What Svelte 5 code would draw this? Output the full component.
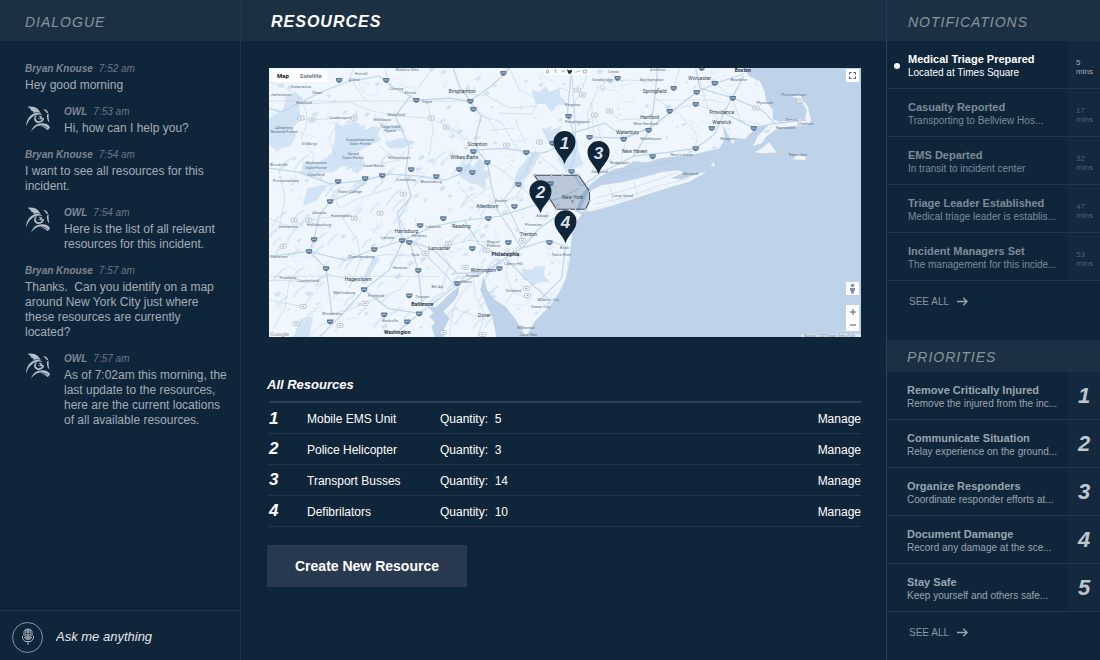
<script lang="ts">
	type Message = { from: string; time: string; text: string };
	type Label = [string, number, number, number?];

	const messages: Message[] = [
		{ from: 'Bryan Knouse', time: '7:52 am', text: 'Hey good morning' },
		{ from: 'OWL', time: '7:53 am', text: 'Hi, how can I help you?' },
		{
			from: 'Bryan Knouse',
			time: '7:54 am',
			text: 'I want to see all resources for this\nincident.'
		},
		{
			from: 'OWL',
			time: '7:54 am',
			text: 'Here is the list of all relevant\nresources for this incident.'
		},
		{
			from: 'Bryan Knouse',
			time: '7:57 am',
			text: 'Thanks.  Can you identify on a map\naround New York City just where\nthese resources are currently\nlocated?'
		},
		{
			from: 'OWL',
			time: '7:57 am',
			text: 'As of 7:02am this morning, the\nlast update to the resources,\nhere are the current locations\nof all available resources.'
		}
	];

	const resources = [
		{ name: 'Mobile EMS Unit', quantity: 5 },
		{ name: 'Police Helicopter', quantity: 3 },
		{ name: 'Transport Busses', quantity: 14 },
		{ name: 'Defibrilators', quantity: 10 }
	];

	const notifications = [
		{ title: 'Medical Triage Prepared', detail: 'Located at Times Square', mins: 5 },
		{ title: 'Casualty Reported', detail: 'Transporting to Bellview Hos...', mins: 17 },
		{ title: 'EMS Departed', detail: 'In transit to incident center', mins: 32 },
		{ title: 'Triage Leader Established', detail: 'Medical triage leader is establis...', mins: 47 },
		{ title: 'Incident Managers Set', detail: 'The management for this incide...', mins: 53 }
	];

	const priorities = [
		{ title: 'Remove Critically Injured', detail: 'Remove the injured from the inc...' },
		{ title: 'Communicate Situation', detail: 'Relay experience on the ground...' },
		{ title: 'Organize Responders', detail: 'Coordinate responder efforts at...' },
		{ title: 'Document Damange', detail: 'Record any damage at the sce...' },
		{ title: 'Stay Safe', detail: 'Keep yourself and others safe...' }
	];

	const pins = [
		{ n: 1, x: 295, y: 96 },
		{ n: 3, x: 329, y: 106 },
		{ n: 2, x: 271, y: 145 },
		{ n: 4, x: 296, y: 175 }
	];

	const vertices = [
		[265, 107], [282, 107], [293, 107], [309, 107], [320, 123],
		[320, 133], [316, 141], [306, 141], [300, 141], [287, 141]
	];

	// name, x, y, size
	const labels: Label[] = [
		['Boston', 473, 4, 6], ['Philadelphia', 236, 188, 6], ['Baltimore', 153, 238, 6],
		['Washington', 128, 266, 6], ['New York', 303, 131],
		['Binghamton', 193, 25], ['Scranton', 208, 78], ['Wilkes Barre', 195, 91],
		['Williamsport', 130, 91], ['Tioga State', 121, 60], ['Forest', 121, 64],
		['Susquehannock', 91, 73], ['State Forest', 91, 77], ['Sproul', 84, 87],
		['State Forest', 84, 91], ['Moshannon', 47, 96], ['State Forest', 47, 101],
		['Allegheny', 15, 61], ['National Forest', 15, 65], ['State College', 81, 125],
		['Lewisburg', 137, 113], ['Bloomsburg', 162, 115], ['Lock Haven', 105, 99],
		['Clearfield', 47, 108], ['Punxsutawney', 17, 114], ['Brookville', 10, 98],
		['St Marys', 40, 77], ['Coudersport', 71, 51], ['Mansfield', 127, 48],
		['Wellsboro', 113, 53], ['Bradford', 35, 36], ['Olean', 48, 26],
		['Salamanca', 32, 20], ['Jamestown', 12, 28], ['Corning', 127, 22],
		['Elmira', 141, 26], ['Hornell', 92, 7], ['Alfred', 85, 13],
		['Watkins Glen', 138, 3], ['Sayre', 158, 35], ['Easton', 232, 134],
		['Allentown', 218, 140], ['Altoona', 50, 146], ['Huntingdon', 72, 149],
		['Hollidaysburg', 50, 158], ['Johnstown', 19, 160], ['Harrisburg', 137, 165],
		['Hershey', 150, 169], ['Lebanon', 164, 160], ['Reading', 192, 160],
		['Carlisle', 118, 171], ['York', 146, 188], ['Lancaster', 170, 182],
		['Chambersburg', 92, 190], ['Hanover', 131, 201], ['Somerset', 10, 190],
		['Cumberland', 39, 214], ['Frostburg', 19, 211], ['Hagerstown', 89, 213],
		['Martinsburg', 75, 226], ['Frederick', 107, 229], ['Towson', 153, 230],
		['Rockville', 121, 254], ['Winchester', 63, 247], ['Bel Air', 168, 220],
		['Newark', 203, 209], ['Wilmington', 214, 204], ['Elkton', 197, 215],
		['Cherry Hill', 244, 197], ['Vineland', 244, 224], ['Dover', 215, 249],
		['Atlantic City', 279, 233], ['Ocean City', 271, 240], ['Wildwood', 256, 261],
		['Cape May', 259, 268], ['Trenton', 259, 168], ['Princeton', 264, 158],
		['Edison', 273, 149], ['King of', 224, 175], ['Prussia', 224, 179],
		['Brick', 295, 181], ['Toms River', 292, 188], ['Lenox', 344, 5],
		['Amherst', 388, 3], ['Northampton', 382, 13], ['Stockbridge', 333, 13],
		['Worcester', 430, 12], ['Brookline', 469, 13], ['Springfield', 385, 25],
		['Hartford', 380, 51], ['West Hartford', 376, 57], ['Providence', 452, 46],
		['Warwick', 452, 56], ['Plymouth', 495, 36], ['Provincetown', 524, 28],
		['Barnstable', 516, 61], ['Dennis', 522, 53], ['Chatham', 536, 57],
		['Newport', 458, 72], ['Nantucket', 528, 88], ['Waterbury', 358, 66],
		['Middletown', 381, 72], ['New Haven', 365, 85], ['New London', 412, 88],
		['Bridgeport', 350, 96], ['Stamford', 330, 105], ['Montauk', 421, 107],
		['Long Island', 353, 129], ['Poughkeepsie', 308, 55], ['Kingston', 303, 38]
	];

	const major = [
		'New York', 'Binghamton', 'Scranton', 'Wilkes Barre', 'Allentown', 'Harrisburg',
		'Lancaster', 'Reading', 'Trenton', 'Wilmington', 'Worcester', 'Springfield',
		'Hartford', 'Providence', 'Warwick', 'New Haven', 'Waterbury', 'Hagerstown', 'Dover'
	];

	const interstates = [
		[70, 12], [117, 12], [234, 5], [147, 32], [201, 33], [204, 41], [204, 83],
		[190, 101], [203, 104], [218, 94], [257, 84], [283, 75], [249, 116], [167, 108],
		[142, 101], [113, 107], [96, 110], [69, 113], [61, 133], [174, 150], [219, 150],
		[245, 138], [151, 157], [133, 172], [140, 174], [105, 181], [45, 171], [40, 183],
		[57, 200], [95, 221], [149, 202], [140, 227], [188, 215], [203, 180], [239, 174],
		[230, 200], [280, 174], [115, 246], [150, 245], [138, 253], [61, 253], [432, 0],
		[348, 10], [404, 20], [445, 15], [427, 24], [426, 36], [463, 30], [400, 43],
		[379, 62], [442, 60], [484, 60], [354, 71], [320, 69], [426, 80], [383, 88],
		[302, 103], [299, 48], [281, 115]
	];

	const routes = [
		[32, 50], [43, 52], [85, 50], [162, 50], [177, 59], [237, 77], [270, 74],
		[134, 126], [25, 152], [40, 152], [85, 150], [111, 145], [14, 178], [179, 175],
		[156, 185], [217, 182], [253, 172], [196, 199], [34, 238], [27, 255], [71, 257],
		[96, 235], [257, 220], [258, 227], [308, 22], [313, 27], [325, 47], [340, 43],
		[486, 40], [530, 33], [174, 264], [213, 266]
	];

	const highways = [
		'M0 40 L12 44 32 34 52 24 78 14 110 8 125 20 148 32 180 30 200 33 212 48 206 70 208 82 195 104 176 112 150 108 120 106 96 112 62 116 30 104 0 100',
		'M208 82 Q235 78 258 84 T300 66 L335 55 356 70 383 58 404 42 427 24 450 14 474 6',
		'M201 33 L190 18 184 0 M200 33 Q225 18 240 0 M302 0 L298 45 308 78 300 102 312 118',
		'M208 82 L218 95 222 118 228 142 240 160 252 180 236 190 214 204 188 216 168 232 150 245 130 262',
		'M0 188 L40 183 76 192 105 181 134 172 164 158 196 152 230 148 262 138 290 130 310 120',
		'M134 172 L120 202 95 221 74 245 50 269 M95 221 L118 240 150 245',
		'M140 172 L149 202 153 238 M140 172 L165 182 188 205 214 204',
		'M133 170 L128 145 142 128 136 108 140 78 126 48 141 28',
		'M312 118 L332 104 364 88 400 84 426 80 445 66 454 45 474 8',
		'M364 88 L381 60 385 30 388 0 M426 0 L430 20 463 30 492 42 506 56',
		'M454 45 L484 60 500 56 536 52 M320 69 L354 70 380 60',
		'M252 180 L270 160 292 145 M252 180 L278 172 296 178 292 210 270 232',
		'M236 190 L256 210 278 230 M195 152 L210 176 230 188',
		'M61 133 L84 124 98 112 M61 133 L50 148 45 171 40 183 57 200 63 247'
	];

	const streets = [
		'M0 14 Q25 20 34 36 T32 70 L45 88 40 104 M34 36 L80 34 100 42 126 48 160 50 178 58 208 78',
		'M84 14 L94 30 100 34 M71 51 L60 70 68 92 100 98 130 92 138 80',
		'M158 35 L164 60 160 88 M164 0 L150 18 141 28 M190 25 L218 28 240 40 266 38',
		'M212 48 L232 54 246 78 266 96 M240 0 L250 22 270 32 290 20 302 24',
		'M230 45 L262 46 272 28 M246 52 L256 76 M220 62 L246 60',
		'M10 102 L16 130 10 160 0 170 M47 108 L60 116 70 140 90 130 122 120',
		'M0 150 L20 158 50 150 72 148 92 140 M72 148 L88 172 92 190 80 220',
		'M92 190 L120 186 146 188 170 180 198 172 224 174 M170 180 L180 196 172 220',
		'M0 212 L20 212 40 215 60 206 89 214 M20 212 L16 240 4 260 M60 246 L84 240 107 230 120 240',
		'M40 269 L50 258 66 250 M0 232 L34 238 46 224 M107 230 L130 222 140 210',
		'M180 269 L184 240 194 222 204 214 M208 269 L216 246 206 228 204 212 M184 240 L214 250',
		'M244 224 L236 206 240 190 M244 224 L262 232 M244 224 L236 234',
		'M320 69 L318 44 328 22 344 6 M333 14 L360 12 384 14 M340 43 L350 52 380 50',
		'M385 30 L410 46 428 68 424 84 M400 42 L426 36 452 46 M358 66 L350 96',
		'M430 12 L438 40 452 56 456 70 M404 20 L410 0 M445 15 L463 30',
		'M463 30 L470 52 492 56 M320 0 L312 24 302 38 M326 47 L334 82 330 104',
		'M325 128 L356 122 386 112 408 104 M325 135 L354 128 388 118 420 110',
		'M266 84 L280 96 290 104 M262 88 L256 110 248 128 232 134 M228 142 L206 136 190 118',
		'M190 140 L204 130 222 118 M110 78 L128 92 M146 150 L150 168 M10 60 L28 50 40 52 71 50',
		'M84 0 L80 14 M116 0 L118 10 M218 94 L236 104 249 116 262 128'
	];

	const forests = [
		'M0 50 L14 42 18 28 26 24 34 30 30 40 32 50 24 60 27 68 22 78 12 80 8 84 0 76Z',
		'M66 56 L74 58 88 54 96 62 104 58 112 60 108 66 112 72 98 78 88 84 92 88 96 96 88 106 80 98 72 98 64 104 56 104 46 96 62 86 66 72Z',
		'M110 54 L120 58 132 56 136 64 124 63 118 66Z M116 74 L132 70 146 74 134 80 120 80Z',
		'M34 94 L44 95 56 92 62 104 52 104 44 110 32 106Z',
		'M190 96 L200 95 204 99 210 90 216 96 214 102 222 104 216 112 216 122 208 116 202 116 190 108Z',
		'M248 102 L258 90 266 82 270 88 260 106 242 122Z',
		'M252 200 L262 202 266 198 276 198 274 206 280 214 270 214 262 218 260 212 254 212Z',
		'M104 188 L110 190 96 216 92 214Z M38 120 L58 116 48 132 34 138Z',
		'M262 22 L270 24 276 18 280 24 290 20 291 28 298 36 288 37 282 44 276 36 266 36Z M272 60 L282 62 292 58 290 66 298 72 286 72 280 76Z',
		'M24 269 L32 250 44 248 40 269Z M286 84 L308 80 314 96 296 104Z'
	];

	// small repeatable scatter for woodland and back-road texture
	let seed = 11;
	function rand(): number {
		seed = (seed * 16807) % 2147483647;
		return seed / 2147483647;
	}

	const ridges = Array.from({ length: 100 }, () => {
		const x = rand() * 220;
		const y = 95 + rand() * 165;
		const len = 4 + rand() * 12;
		return `M${x} ${y} q${len * 0.4} ${-len * 0.8} ${len} ${-len}`;
	}).join(' ');

	const patches = Array.from({ length: 260 }, () => {
		const x = rand() * 500;
		const y = rand() * 260;
		const w = 1 + rand() * 4;
		return `M${x} ${y} l${w} ${-w * 0.6} ${w * 0.6} ${w * 0.5} ${-w} ${w * 0.7}z`;
	}).join(' ');

	const lanes = Array.from({ length: 220 }, () => {
		const x = rand() * 510;
		const y = rand() * 260;
		return `M${x} ${y} q${rand() * 16 - 8} ${rand() * 12} ${rand() * 30 - 15} ${rand() * 22 - 8}`;
	}).join(' ');

	let question = $state('');
	let mapType = $state('Map');
</script>

{#snippet owl()}
	<svg class="owl" viewBox="0 0 75 80" aria-hidden="true">
		<path d="M7 2 C18 0 29 2 36 8 C41 12 42 17 47 22 C38 18 30 17 24 22 C26 17 23 14 16 13 C20 10 13 8 7 2Z" />
		<path d="M30 21 C14 25 3 40 2 61 C8 46 14 35 31 27 C38 24 45 25 51 28 C46 21 38 19 30 21Z" />
		<path d="M32 27 C22 34 25 49 37 50 C46 52 53 46 56 38 L51 34 C50 42 45 46 39 45 C31 44 28 35 34 29Z" />
		<path d="M39 31 C43 27 51 30 50 37 C47 41 39 40 38 35 L43 37 L45 33Z" />
		<path d="M53 10 C61 9 67 15 68 22 L62 19 C61 15 58 13 53 10Z M64 25 L69 23 C68 33 70 42 71 49 C66 44 63 36 64 25Z" />
		<path d="M17 76 C22 59 34 51 49 51 C60 51 70 55 73 63 L70 69 C62 60 53 57 44 58 C32 59 24 66 17 76Z" />
		<path d="M45 59 C55 59 61 63 70 68 L65 71 C60 65 54 62 45 59Z" />
	</svg>
{/snippet}

{#snippet seeAll()}
	<a class="see-all" href="#all">
		SEE ALL
		<svg viewBox="0 0 11 9" width="11" height="9" aria-hidden="true">
			<path d="M0 4.5 H10 M6.2 0.8 L10 4.5 6.2 8.2" />
		</svg>
	</a>
{/snippet}

<div class="app">
	<section class="dialogue">
		<h2 class="bar">DIALOGUE</h2>
		<div class="messages">
			{#each messages as message, i (i)}
				<article class="message">
					{#if message.from === 'OWL'}
						{@render owl()}
					{/if}
					<div>
						<p class="meta"><b>{message.from}</b><span>{message.time}</span></p>
						<p class="text">{message.text}</p>
					</div>
				</article>
			{/each}
		</div>
		<form class="ask">
			<button type="button" class="mic" aria-label="Speak">
				<svg viewBox="0 0 14 18" width="14" height="18" aria-hidden="true">
					<path class="fill" d="M4 3.5 Q4 1 7 1 Q10 1 10 3.5 V8.5 Q10 11 7 11 Q4 11 4 8.5Z" />
					<path d="M3 8 V3.5 Q3.5 1 7 1 Q10.5 1 11 3.5 V8 M1.5 8 V10.5 L4 13.5 H10 L12.5 10.5 V8 M3 9 Q4 11.5 7 11.5 T11 9 M7 13.5 V17" />
					<path class="slit" d="M5.5 2.5 V8.5 M8.5 2.5 V8.5 M4 5.5 H10" />
				</svg>
			</button>
			<input type="text" aria-label="Ask me anything" placeholder="Ask me anything" bind:value={question} />
		</form>
	</section>

	<main class="resources">
		<h1 class="bar">RESOURCES</h1>
		<div class="content">
			<div class="map">
				<svg class="canvas" viewBox="0 0 591 269" role="img" aria-label="Map of resource locations">
					<rect class="land" width="591" height="269" />
					{#each forests as d, i (i)}
						<path class="forest" {d} />
					{/each}
					<path class="forest" d={patches} />
					<path class="ridge" d={ridges} />
					<path class="lane" d={lanes} />
					<path class="state-line" d="M0 33 H198 Q222 50 228 66 M0 208 H170 M388 32 H446 M322 34 L326 92" />
					{#each streets as d, i (i)}
						<path class="street" {d} />
					{/each}
					{#each highways as d, i (i)}
						<path class="highway" {d} />
					{/each}
					<path class="river" d="M146 175 L160 190 176 206 188 220 M137 165 L130 150 142 128 M266 84 L254 106 234 132 246 154 254 174 236 190 218 204 214 220 M302 0 L306 60 304 100 310 118" />

					<path class="water" d="M591 0 H474 L479 8 490 13 495 24 496 33 503 42 503 51 510 54 524 51 535 52 537 42 530 31 521 28 530 27 538 39 541 52 538 57 524 58 510 60 504 63 496 69 492 75 483 78 488 68 499 57 490 58 481 65 475 71 466 70 463 76 458 67 454 57 455 71 450 80 437 83 424 86 408 88 390 90 378 94 364 93 354 99 344 101 331 108 321 116 313 125 306 143 312 146 308 152 303 165 301 178 300 194 296 211 289 225 281 237 266 252 256 269 H591Z" />
					<path class="water" d="M256 269 L253 261 244 248 236 238 225 231 218 222 214 208 211 222 217 236 223 249 227 269Z" />
					<path class="water" d="M190 218 L183 223 174 232 166 239 158 238 164 244 160 248 166 254 162 258 166 269 H174 L175 260 180 250 174 243 184 233 189 226Z" />
					<path class="land" d="M319 123 L332 117 352 114 374 109 391 104 408 102 415 104 401 110 412 111 430 105 437 104 418 114 400 119 372 128 347 136 322 143 310 143Z" />
					<path class="land" d="M485 84 L495 78 499 74 505 82 508 84 492 85Z M523 91 L528 86 536 89 535 92Z M441 98 L444 93 445 98Z" />
					<path class="street" d="M325 130 L356 122 386 112 408 104 M325 136 L354 130 388 118 420 110 M340 118 L344 134 M364 112 L368 128" />
					<path class="shoal" d="M324 141 L372 126 400 117 M299 184 L298 198 288 220 266 248 M262 230 L274 234 284 224" />
					<path class="ferry" d="M330 109 L424 88 M424 86 L436 92" />

					{#each interstates as [x, y], i (i)}
						<g>
							<path class="shield" d="M{x - 3} {y - 2} h6 q1 4 -3 5 q-4 -1 -3 -5z" />
							<path class="shield-mark" d="M{x - 2} {y} h4" />
						</g>
					{/each}
					{#each routes as [x, y], i (i)}
						<g>
							<rect class="route" x={x - 3} y={y - 2} width="6" height="4" rx="1" />
							<path class="route-mark" d="M{x - 1} {y} h2" />
						</g>
					{/each}

					<polygon class="zone" points={vertices.map((v) => v.join(',')).join(' ')} />
					{#each labels as [name, x, y, size], i (i)}
						<text class="place" class:major={major.includes(name)} class:city={size === 6} {x} {y}>{name}</text>
					{/each}
					{#each vertices as [cx, cy], i (i)}
						<circle class="vertex" {cx} {cy} r="1" />
					{/each}
					<circle class="town" cx="303" cy="133" r="1" />

					{#each pins as pin (pin.n)}
						<g transform="translate({pin.x} {pin.y})">
							<path class="pin" d="M0 0 C-3 -9 -11 -13 -11 -22 A11 11 0 0 1 11 -22 C11 -13 3 -9 0 0Z" />
							<text class="pin-label" y="-15">{pin.n}</text>
						</g>
					{/each}

					<g class="tools">
						<rect x="274" y="0" width="46" height="7" />
						<path d="M277 5 V3 q0 -1 1 -1 h1 V5z M285 2 h2 M286 2 V5 M293 2 a1 1 0 1 0 1 0" />
						<path class="active" d="M298 2 l2 1 2 -1 v2 l-2 2 -1 -1z" />
						<path d="M306 5 l2 -2 1 1 2 -2 M314 2 h3 v3 h-3z" />
					</g>
					<text class="google" x="1" y="268">Google</text>
					<rect class="credit-bg" x="532" y="266" width="59" height="3" />
					<text class="credit" x="534" y="269">Map data ©2018 Google    Terms of Use</text>
				</svg>

				<div class="map-type">
					{#each ['Map', 'Satellite'] as kind (kind)}
						<button type="button" class:active={mapType === kind} onclick={() => (mapType = kind)}>{kind}</button>
					{/each}
				</div>
				<button type="button" class="control fullscreen" aria-label="Fullscreen">
					<svg viewBox="0 0 7 7" width="7" height="7" aria-hidden="true">
						<path d="M0.5 2.5 V0.5 H2.5 M4.5 0.5 H6.5 V2.5 M6.5 4.5 V6.5 H4.5 M2.5 6.5 H0.5 V4.5" />
					</svg>
				</button>
				<div class="map-nav">
					<button type="button" class="control" aria-label="Street view">
						<svg class="person" viewBox="0 0 7 11" width="7" height="11" aria-hidden="true">
							<circle cx="3.5" cy="2.5" r="1.8" />
							<path d="M1 5 H6 V8 H5 V10.5 H2 V8 H1Z" />
						</svg>
					</button>
					<div class="zoom">
						<button type="button" class="control" aria-label="Zoom in">
							<svg viewBox="0 0 6 6" width="6" height="6" aria-hidden="true"><path d="M0 3 H6 M3 0 V6" /></svg>
						</button>
						<button type="button" class="control" aria-label="Zoom out">
							<svg viewBox="0 0 6 6" width="6" height="6" aria-hidden="true"><path d="M0 3 H6" /></svg>
						</button>
					</div>
				</div>
			</div>

			<h3>All Resources</h3>
			<table>
				<tbody>
					{#each resources as resource, i (resource.name)}
						<tr>
							<td class="rank">{i + 1}</td>
							<td class="name">{resource.name}</td>
							<td>Quantity: &nbsp;{resource.quantity}</td>
							<td class="manage"><a href="#manage">Manage</a></td>
						</tr>
					{/each}
				</tbody>
			</table>
			<button type="button" class="create">Create New Resource</button>
		</div>
	</main>

	<aside class="side">
		<section class="notifications">
			<h2 class="bar">NOTIFICATIONS</h2>
			<ul>
				{#each notifications as item, i (item.title)}
					<li class:unread={i === 0}>
						<div class="summary">
							<p class="title">{item.title}</p>
							<p class="detail">{item.detail}</p>
						</div>
						<p class="time">{item.mins}<br />mins</p>
					</li>
				{/each}
			</ul>
			{@render seeAll()}
		</section>
		<section class="priorities">
			<h2 class="bar short">PRIORITIES</h2>
			<ul>
				{#each priorities as item, i (item.title)}
					<li>
						<div class="summary">
							<p class="title">{item.title}</p>
							<p class="detail">{item.detail}</p>
						</div>
						<p class="order">{i + 1}</p>
					</li>
				{/each}
			</ul>
			{@render seeAll()}
		</section>
	</aside>
</div>

<style>
	:global(body) {
		background: #0f253a;
	}
	.app {
		display: grid;
		grid-template-columns: 241px minmax(0, 1fr) 214px;
		min-height: 100vh;
		box-sizing: border-box;
		background: #0f253a;
		color: #fff;
		font-family: 'Liberation Sans', Arial, sans-serif;
		font-size: 12px;
	}
	p,
	h1,
	h2,
	h3,
	ul {
		margin: 0;
		padding: 0;
	}
	ul {
		list-style: none;
	}
	a {
		color: inherit;
		text-decoration: none;
	}
	button,
	input {
		font-family: inherit;
		border: 0;
		padding: 0;
		margin: 0;
	}
	button {
		cursor: pointer;
	}
	.bar {
		display: flex;
		align-items: center;
		height: 41px;
		padding: 2px 0 0 25px;
		box-sizing: border-box;
		background: #1c3044;
		color: #8a939d;
		font-size: 14px;
		font-weight: 400;
		font-style: italic;
		letter-spacing: 1px;
	}
	h1.bar {
		padding-left: 30px;
		color: #fff;
		font-size: 16px;
		font-weight: 700;
	}

	.dialogue {
		display: flex;
		flex-direction: column;
		border-right: 1px solid #20364a;
	}
	.messages {
		flex: 1;
		display: flex;
		flex-direction: column;
		gap: 12px;
		padding: 21px 12px 20px 25px;
	}
	.message {
		display: flex;
		gap: 13px;
	}
	.owl {
		flex: none;
		width: 26px;
		height: 27px;
		margin-top: 1px;
		fill: #b4bec8;
	}
	.meta {
		margin-bottom: 2px;
		color: #7d8791;
		font-size: 10px;
		font-style: italic;
		line-height: 14px;
	}
	.meta span {
		margin-left: 6px;
		color: #6c7782;
	}
	.text {
		color: #a3adb6;
		line-height: 15px;
		white-space: pre;
	}
	.ask {
		display: flex;
		align-items: center;
		gap: 13px;
		height: 50px;
		padding: 3px 12px 0;
		box-sizing: border-box;
		border-top: 1px solid #20364a;
	}
	.mic {
		display: grid;
		place-items: center;
		flex: none;
		width: 31px;
		height: 31px;
		box-sizing: border-box;
		border: 1px solid #8b97a2;
		border-radius: 50%;
		background: none;
	}
	.mic path {
		fill: none;
		stroke: #aab4bd;
	}
	.mic .fill {
		fill: #8b97a2;
		stroke: none;
	}
	.mic .slit {
		stroke: #0f253a;
		stroke-width: 0.5;
	}
	.ask input {
		flex: 1;
		min-width: 0;
		height: 28px;
		padding-bottom: 2px;
		box-sizing: border-box;
		background: none;
		color: #fff;
		font-size: 13px;
		font-style: italic;
	}
	.ask input::placeholder {
		color: #e4e8ec;
		opacity: 1;
	}

	.content {
		padding: 27px 25px 24px 28px;
	}
	.map {
		position: relative;
	}
	.canvas {
		display: block;
		width: 100%;
		height: auto;
	}
	.land {
		fill: #eff6fe;
	}
	.water {
		fill: #bed3e9;
	}
	.forest {
		fill: #d3e3f6;
	}
	.ridge,
	.river,
	.lane,
	.street,
	.highway,
	.state-line,
	.shoal,
	.ferry {
		fill: none;
	}
	.ridge {
		stroke: #dae8f7;
		stroke-width: 2;
	}
	.river {
		stroke: #c3d8ee;
	}
	.lane {
		stroke: #d3e2f2;
		stroke-width: 0.6;
	}
	.street {
		stroke: #c9d9eb;
		stroke-width: 0.7;
	}
	.highway {
		stroke: #bfd4ec;
		stroke-width: 1.2;
		stroke-linejoin: round;
	}
	.state-line {
		stroke: #c5ced8;
		stroke-width: 0.5;
	}
	.shoal {
		stroke: #e3eef9;
		stroke-width: 0.8;
	}
	.ferry {
		stroke: #a9c0d8;
		stroke-width: 0.4;
	}
	.shield {
		fill: #5d7896;
	}
	.shield-mark {
		stroke: #cfdcea;
		stroke-width: 0.8;
	}
	.route {
		fill: #f4f8fc;
		stroke: #8a99a9;
		stroke-width: 0.5;
	}
	.route-mark {
		stroke: #75869a;
		stroke-width: 0.8;
	}
	.zone {
		fill: #3f5f86;
		fill-opacity: 0.3;
		stroke: #3c4a5b;
		stroke-width: 1;
	}
	.vertex {
		fill: #fff;
		stroke: #4c5966;
		stroke-width: 0.4;
	}
	.town {
		fill: none;
		stroke: #3c4a59;
		stroke-width: 0.5;
	}
	.place {
		fill: #607183;
		font-family: Roboto, 'Liberation Sans', sans-serif;
		font-size: 4px;
		text-anchor: middle;
	}
	.place.major {
		fill: #2f3e4e;
		font-size: 5px;
	}
	.place.city {
		fill: #1f2d3b;
		font-size: 5px;
		font-weight: 700;
	}
	.pin {
		fill: #0f253a;
	}
	.pin-label {
		fill: #dde2e8;
		font-size: 17px;
		font-weight: 700;
		font-style: italic;
		text-anchor: middle;
	}
	.tools rect {
		fill: #f8fbff;
	}
	.tools path {
		fill: none;
		stroke: #8b97a5;
		stroke-width: 0.7;
	}
	.tools .active {
		fill: #1b2733;
		stroke: #1b2733;
	}
	.google {
		fill: #7b8794;
		stroke: #fff;
		stroke-width: 1;
		paint-order: stroke;
		font-size: 6px;
	}
	.credit-bg {
		fill: #e5eef7;
	}
	.credit {
		fill: #5c6b7a;
		font-size: 3px;
	}
	.map-type {
		position: absolute;
		top: 2px;
		left: 3px;
		display: flex;
		background: #fff;
	}
	.map-type button {
		padding: 0 5px;
		background: none;
		color: #5c6b7b;
		font-family: Roboto, 'Liberation Sans', sans-serif;
		font-size: 6px;
		font-weight: 500;
		line-height: 12px;
	}
	.map-type button:last-child {
		padding-left: 6px;
	}
	.map-type .active {
		color: #111;
		font-weight: 700;
	}
	.control {
		display: grid;
		place-items: center;
		width: 13px;
		height: 13px;
		background: #fff;
	}
	.control path {
		fill: none;
		stroke: #46586c;
	}
	.fullscreen {
		position: absolute;
		top: 1px;
		right: 2px;
	}
	.map-nav {
		position: absolute;
		right: 2px;
		bottom: 6px;
		display: grid;
		gap: 10px;
	}
	.person circle,
	.person path {
		fill: #7d93ac;
		stroke: none;
	}

	h3 {
		margin: 40px 0 8px -2px;
		font-size: 13px;
		font-style: italic;
		line-height: 16px;
	}
	table {
		width: 100%;
		border-collapse: collapse;
		border-top: 2px solid #2c4156;
	}
	tr {
		border-bottom: 1px solid #20364a;
	}
	td {
		height: 31px;
		padding: 3px 0 0;
		box-sizing: border-box;
		line-height: 15px;
	}
	td.rank {
		width: 38px;
		padding-top: 0;
		font-size: 17px;
		font-style: italic;
		font-weight: 700;
	}
	td.name {
		width: 133px;
	}
	td.manage {
		text-align: right;
	}
	.create {
		display: block;
		height: 42px;
		margin: 18px 0 0 -2px;
		padding: 0 28px;
		background: #29394f;
		color: #fff;
		font-size: 14px;
		font-weight: 700;
	}

	.side {
		border-left: 1px solid #2a3f53;
	}
	.side .bar {
		padding-left: 21px;
	}
	.side .bar.short {
		height: 32px;
		padding-left: 20px;
	}
	li {
		display: grid;
		grid-template-columns: minmax(0, 1fr) 32px;
		height: 48px;
		border-bottom: 1px solid #22384c;
		box-sizing: border-box;
	}
	.summary {
		position: relative;
		padding: 12px 0 0 21px;
		color: #7f8b96;
		font-size: 10px;
		line-height: 13px;
		white-space: nowrap;
	}
	.title {
		font-size: 11px;
		font-weight: 700;
	}
	.time,
	.order {
		background: #14293e;
	}
	.time {
		padding: 17px 0 0 8px;
		color: #53616f;
		font-size: 8px;
		line-height: 9px;
	}
	.unread .summary {
		color: #fff;
	}
	.unread .time {
		color: #a5afb8;
	}
	.unread .summary::before {
		content: '';
		position: absolute;
		top: 22px;
		left: 7px;
		width: 6px;
		height: 6px;
		border-radius: 50%;
		background: #fff;
	}
	.priorities .summary {
		padding-left: 20px;
		color: #9aa5af;
	}
	.order {
		display: grid;
		place-items: center;
		color: #bdc6ce;
		font-size: 22px;
		font-weight: 700;
		font-style: italic;
	}
	.see-all {
		display: flex;
		align-items: center;
		gap: 8px;
		height: 40px;
		padding-left: 22px;
		color: #8b97a2;
		font-size: 10px;
	}
	.see-all path {
		fill: none;
		stroke: #9aa5af;
		stroke-width: 1.4;
	}
	.notifications .see-all {
		margin-bottom: 19px;
	}
</style>
